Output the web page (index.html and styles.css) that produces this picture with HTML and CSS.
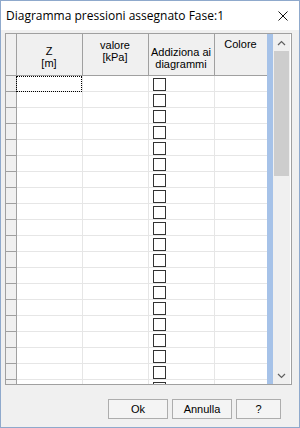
FILE: index.html
```html
<!DOCTYPE html>
<html lang="it">
<head>
    <meta charset="UTF-8">
    <title>Diagramma pressioni assegnato Fase:1</title>
    <link rel="stylesheet" href="styles.css">
</head>
<body>
    <div class="window">
        <div class="titlebar">
            <span class="title">Diagramma pressioni assegnato Fase:1</span>
            <svg class="close" width="10" height="10" viewBox="0 0 10 10">
                <path d="M0.5 0.5 L9.5 9.5 M9.5 0.5 L0.5 9.5" stroke="#111" stroke-width="1" fill="none"/>
            </svg>
        </div>
        <div class="client">
            <div class="grid-frame">
                <div class="grid-body">
                    <table class="grid">
                        <colgroup>
                            <col class="c-fix"><col class="c-z"><col class="c-val"><col class="c-add"><col class="c-col">
                        </colgroup>
                        <thead>
                            <tr>
                                <th class="fix"><div class="hcell"></div></th>
                                <th><div class="hcell h-z">Z<br>[m]</div></th>
                                <th><div class="hcell h-val">valore<br>[kPa]</div></th>
                                <th><div class="hcell h-add">Addiziona ai<br>diagrammi</div></th>
                                <th><div class="hcell h-col">Colore</div></th>
                            </tr>
                        </thead>
                        <tbody>
                            <tr><td class="fix"></td><td class="focus"></td><td></td><td><span class="chk"></span></td><td></td></tr>
                            <tr><td class="fix"></td><td></td><td></td><td><span class="chk"></span></td><td></td></tr>
                            <tr><td class="fix"></td><td></td><td></td><td><span class="chk"></span></td><td></td></tr>
                            <tr><td class="fix"></td><td></td><td></td><td><span class="chk"></span></td><td></td></tr>
                            <tr><td class="fix"></td><td></td><td></td><td><span class="chk"></span></td><td></td></tr>
                            <tr><td class="fix"></td><td></td><td></td><td><span class="chk"></span></td><td></td></tr>
                            <tr><td class="fix"></td><td></td><td></td><td><span class="chk"></span></td><td></td></tr>
                            <tr><td class="fix"></td><td></td><td></td><td><span class="chk"></span></td><td></td></tr>
                            <tr><td class="fix"></td><td></td><td></td><td><span class="chk"></span></td><td></td></tr>
                            <tr><td class="fix"></td><td></td><td></td><td><span class="chk"></span></td><td></td></tr>
                            <tr><td class="fix"></td><td></td><td></td><td><span class="chk"></span></td><td></td></tr>
                            <tr><td class="fix"></td><td></td><td></td><td><span class="chk"></span></td><td></td></tr>
                            <tr><td class="fix"></td><td></td><td></td><td><span class="chk"></span></td><td></td></tr>
                            <tr><td class="fix"></td><td></td><td></td><td><span class="chk"></span></td><td></td></tr>
                            <tr><td class="fix"></td><td></td><td></td><td><span class="chk"></span></td><td></td></tr>
                            <tr><td class="fix"></td><td></td><td></td><td><span class="chk"></span></td><td></td></tr>
                            <tr><td class="fix"></td><td></td><td></td><td><span class="chk"></span></td><td></td></tr>
                            <tr><td class="fix"></td><td></td><td></td><td><span class="chk"></span></td><td></td></tr>
                            <tr><td class="fix"></td><td></td><td></td><td><span class="chk"></span></td><td></td></tr>
                            <tr><td class="fix"></td><td></td><td></td><td><span class="chk"></span></td><td></td></tr>
                        </tbody>
                    </table>
                </div>
                <div class="blue-strip"></div>
                <div class="scrollbar">
                    <div class="arrow">
                        <svg width="9" height="6" viewBox="0 0 9 6"><path d="M1 5 L4.5 1.5 L8 5" stroke="#606060" stroke-width="1.2" fill="none"/></svg>
                    </div>
                    <div class="thumb"></div>
                    <div class="track"></div>
                    <div class="arrow">
                        <svg width="9" height="6" viewBox="0 0 9 6"><path d="M1 1 L4.5 4.5 L8 1" stroke="#606060" stroke-width="1.2" fill="none"/></svg>
                    </div>
                </div>
            </div>
            <div class="buttons">
                <button class="btn">Ok</button>
                <button class="btn">Annulla</button>
                <button class="btn btn-help">?</button>
            </div>
        </div>
    </div>
</body>
</html>
```
FILE: styles.css
```css
body {
    margin: 0;
    padding: 0;
    background: #fff;
    font-family: "Liberation Sans", Arial, sans-serif;
}
.window {
    width: 300px;
    height: 428px;
    box-sizing: border-box;
    border: 1px solid #8fa9cc;
    display: flex;
    flex-direction: column;
}
.titlebar {
    height: 29px;
    flex: none;
    background: #fff;
    display: flex;
    align-items: center;
    justify-content: space-between;
    padding: 0 11px 0 5px;
}
.title {
    font-family: "Open Sans", "Liberation Sans", sans-serif;
    font-size: 12px;
    color: #000;
}
.client {
    flex: 1;
    background: #f0f0f0;
    padding: 3px 7px 0 4px;
    display: flex;
    flex-direction: column;
}
.grid-frame {
    height: 352px;
    flex: none;
    box-sizing: border-box;
    border: 1px solid #a0a0a0;
    display: flex;
    background: #fff;
}
.grid-body {
    width: 261px;
    overflow: hidden;
}
.grid {
    border-collapse: collapse;
    table-layout: fixed;
    width: 261px;
    font-size: 11px;
}
.c-fix { width: 10px; }
.c-z { width: 66px; }
.c-val { width: 66px; }
.c-add { width: 66px; }
.c-col { width: 53px; }
.grid th {
    padding: 0;
    background: #f0f0f0;
    border-right: 1px solid #a0a0a0;
    border-bottom: 1px solid #a0a0a0;
    font-weight: normal;
    color: #000;
    text-align: center;
    vertical-align: top;
}
.hcell {
    height: 41px;
    box-sizing: border-box;
    line-height: 12px;
}
.h-z { padding-top: 11px; }
.h-val { padding-top: 5px; }
.h-add { padding-top: 12px; }
.h-col { padding-top: 4px; }
.grid td {
    height: 15px;
    padding: 0;
    border-right: 1px solid #e6e6e6;
    border-bottom: 1px solid #e6e6e6;
    vertical-align: top;
}
.grid td.fix {
    background: #f0f0f0;
    border-right: 1px solid #a0a0a0;
    border-bottom: 1px solid #a0a0a0;
}
.grid td.focus {
    outline: 1px dotted #000;
    outline-offset: -1px;
}
.chk {
    display: block;
    width: 11px;
    height: 11px;
    margin: 2px 0 0 4px;
    border: 1px solid #333;
    background: #fff;
}
.blue-strip {
    width: 6px;
    background: #a6c2e8;
}
.scrollbar {
    width: 17px;
    background: #f0f0f0;
    display: flex;
    flex-direction: column;
    align-items: center;
}
.arrow {
    height: 17px;
    width: 17px;
    display: flex;
    align-items: center;
    justify-content: center;
}
.thumb {
    width: 15px;
    height: 125px;
    background: #cdcdcd;
}
.track {
    flex: 1;
}
.buttons {
    display: flex;
    justify-content: flex-end;
    gap: 4px;
    margin-top: 14px;
    padding-right: 11px;
}
.btn {
    width: 60px;
    height: 20px;
    box-sizing: border-box;
    border: 1px solid #adadad;
    background: #f4f4f4;
    font-family: "Liberation Sans", Arial, sans-serif;
    font-size: 11px;
    color: #000;
    padding: 0;
}
.btn-help {
    width: 45px;
}
```
